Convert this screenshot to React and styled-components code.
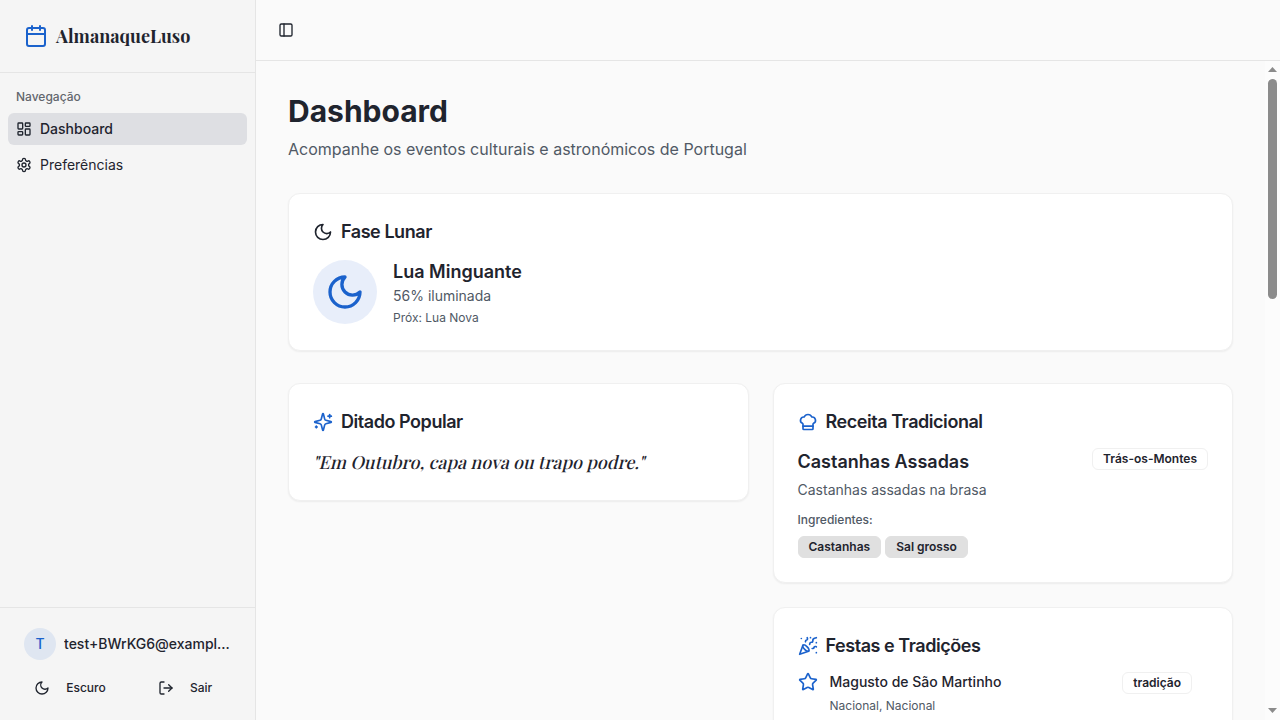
import React from "react";
import styled, { createGlobalStyle, css } from "styled-components";
import { Calendar, LayoutDashboard, LogOut, PanelLeft, ChefHat, PartyPopper, Star } from "lucide-react";

const Global = createGlobalStyle`
  *, *::before, *::after { box-sizing: border-box; }
  body { margin: 0; background: #fafafa; color: #1f242e; font-family: Inter, sans-serif; font-size: 16px; line-height: 24px; }
  h1, h2, h3, p { margin: 0; }
  button { font: inherit; color: inherit; background: none; border: 0; padding: 0; }
  svg { flex-shrink: 0; display: block; }
`;
const blue = "#1b62cc";
const muted = "#505965";

const Shell = styled.div`display: flex; height: 100vh; overflow: hidden;`;
const Sidebar = styled.aside`
  width: 256px; flex: none; display: flex; flex-direction: column;
  background: #f5f5f5; border-right: 1px solid #e5e5e5;
`;
const Brand = styled.div`
  display: flex; align-items: center; gap: 8px; height: 73px; padding: 0 24px;
  border-bottom: 1px solid #e5e5e5; svg { color: ${blue}; }
`;
const BrandName = styled.span`
  font-family: "Playfair Display", "Liberation Serif", serif; font-weight: 700; font-size: 18px; line-height: 28px;
`;
const Nav = styled.nav`flex: 1; padding: 8px; display: flex; flex-direction: column;`;
const NavLabel = styled.div`
  height: 32px; padding: 0 8px; display: flex; align-items: center;
  font-size: 12px; font-weight: 500; line-height: 16px; color: #62666d;
`;
const NavItem = styled.button`
  display: flex; align-items: center; gap: 8px; height: 32px; padding: 0 8px; margin-bottom: 4px;
  border-radius: 6px; font-size: 14px; line-height: 20px; text-align: left;
  ${(p) => p.$active && css`background: #dedfe3; font-weight: 500;`}
`;
const Footer = styled.div`border-top: 1px solid #e5e5e5; padding: 20px 24px 16px; height: 113px;`;
const User = styled.div`display: flex; align-items: center; gap: 8px;`;
const Avatar = styled.div`
  width: 32px; height: 32px; border-radius: 50%; display: grid; place-items: center; flex: none;
  background: #dfe6f1; color: ${blue}; font-size: 14px; font-weight: 500;
`;
const Email = styled.div`
  font-size: 14px; font-weight: 500; line-height: 20px; min-width: 0;
  overflow: hidden; text-overflow: ellipsis; white-space: nowrap;
`;
const Actions = styled.div`display: flex; justify-content: space-between; margin-top: 12px;`;
const Action = styled.button`
  width: 92px; height: 32px; display: flex; align-items: center; justify-content: center; gap: 16px;
  font-size: 12px; font-weight: 500;
`;
const Content = styled.div`flex: 1; min-width: 0; display: flex; flex-direction: column;`;
const Topbar = styled.header`
  height: 61px; flex: none; display: flex; align-items: center; padding: 0 16px; border-bottom: 1px solid #e5e5e5;
`;
const Toggle = styled.button`width: 28px; height: 28px; display: grid; place-items: center;`;
const Body = styled.div`flex: 1; min-height: 0; display: flex;`;
const Main = styled.main`
  flex: 1; min-width: 0; overflow-y: auto; padding: 32px; scrollbar-width: none;
`;
const Scrollbar = styled.div`
  width: 15px; flex: none; background: #fcfcfc; padding: 6px 3px 7px;
  display: flex; flex-direction: column; align-items: center; color: #8b8b8b;
`;
const Thumb = styled.div`width: 9px; height: 220px; margin: 7px 0 auto; border-radius: 5px; background: #8b8b8b;`;
const Title = styled.h1`font-size: 30px; line-height: 36px; font-weight: 700;`;
const Subtitle = styled.p`margin-top: 8px; color: ${muted};`;
const Card = styled.section`
  background: #fff; border: 1px solid #f0f0f0; border-radius: 12px; padding: 24px;
  box-shadow: 0 1px 2px rgba(0, 0, 0, 0.06); margin-top: ${(p) => p.$mt || 0}px;
  min-height: ${(p) => p.$min || 0}px;
`;
const CardTitle = styled.h2`
  display: flex; align-items: center; gap: 8px; margin-bottom: 12px;
  font-size: 18px; line-height: 28px; font-weight: 600; letter-spacing: -0.45px;
  svg { color: ${(p) => (p.$plain ? "inherit" : blue)}; }
`;
const Columns = styled.div`
  display: grid; grid-template-columns: 1fr 1fr; gap: 24px; align-items: start; margin-top: 32px;
`;
const Column = styled.div`display: flex; flex-direction: column; gap: 24px;`;
const Lunar = styled.div`display: flex; align-items: center; gap: 16px;`;
const MoonDisc = styled.div`
  width: 64px; height: 64px; border-radius: 50%; background: #e8eefa; color: ${blue};
  display: grid; place-items: center;
`;
const Heading = styled.h3`font-size: 18px; line-height: 28px; font-weight: 600;`;
const Text = styled.p`font-size: 14px; line-height: 20px; color: ${muted}; margin-top: ${(p) => p.$mt || 0}px;`;
const Small = styled.p`
  font-size: 12px; line-height: 16px; color: ${muted}; margin-top: ${(p) => p.$mt || 0}px;
  font-weight: ${(p) => (p.$medium ? 500 : 400)};
`;
/* The upright face is slanted about its baseline, which keeps the roman letter forms. */
const Quote = styled.p`
  font-family: "Playfair Display", "Liberation Serif", serif; font-weight: 500;
  font-size: 18px; line-height: 28px; transform: skewX(-14deg); transform-origin: 0 20px;
`;
const Between = styled.div`display: flex; justify-content: space-between; align-items: flex-start;`;
const Badge = styled.span`
  display: inline-flex; padding: 2px 10px; border: 1px solid ${(p) => (p.$filled ? "#e0e0e0" : "#f0f0f0")};
  background: ${(p) => (p.$filled ? "#e0e0e0" : "transparent")};
  border-radius: 6px; font-size: 12px; line-height: 16px; font-weight: 600; white-space: nowrap;
`;
const Badges = styled.div`display: flex; gap: 4px; margin-top: 8px;`;
const Event = styled.div`display: flex; gap: 12px; padding-right: 16px; > svg { color: ${blue}; }`;
const EventBody = styled.div`flex: 1;`;
const EventName = styled.div`font-size: 14px; line-height: 20px; font-weight: 500;`;

const Icon = ({ size, children }) => (
  <svg width={size} height={size} viewBox="0 0 24 24" fill="none" stroke="currentColor" strokeWidth="2" strokeLinecap="round" strokeLinejoin="round">
    {children}
  </svg>
);
const Moon = ({ size }) => (
  <Icon size={size}><path d="M12 3a6 6 0 0 0 9 9 9 9 0 1 1-9-9Z" /></Icon>
);
const Gear = ({ size }) => (
  <Icon size={size}>
    <path d="M12.22 2h-.44a2 2 0 0 0-2 2v.18a2 2 0 0 1-1 1.73l-.43.25a2 2 0 0 1-2 0l-.15-.08a2 2 0 0 0-2.73.73l-.22.38a2 2 0 0 0 .73 2.73l.15.1a2 2 0 0 1 1 1.72v.51a2 2 0 0 1-1 1.74l-.15.09a2 2 0 0 0-.73 2.73l.22.38a2 2 0 0 0 2.73.73l.15-.08a2 2 0 0 1 2 0l.43.25a2 2 0 0 1 1 1.73V20a2 2 0 0 0 2 2h.44a2 2 0 0 0 2-2v-.18a2 2 0 0 1 1-1.73l.43-.25a2 2 0 0 1 2 0l.15.08a2 2 0 0 0 2.73-.73l.22-.39a2 2 0 0 0-.73-2.73l-.15-.08a2 2 0 0 1-1-1.74v-.5a2 2 0 0 1 1-1.74l.15-.09a2 2 0 0 0 .73-2.73l-.22-.38a2 2 0 0 0-2.73-.73l-.15.08a2 2 0 0 1-2 0l-.43-.25a2 2 0 0 1-1-1.73V4a2 2 0 0 0-2-2z" />
    <circle cx="12" cy="12" r="3" />
  </Icon>
);
const Sparkles = ({ size }) => (
  <Icon size={size}>
    <path d="M9.937 15.5A2 2 0 0 0 8.5 14.063l-6.135-1.582a.5.5 0 0 1 0-.962L8.5 9.936A2 2 0 0 0 9.937 8.5l1.582-6.135a.5.5 0 0 1 .963 0L14.063 8.5A2 2 0 0 0 15.5 9.937l6.135 1.581a.5.5 0 0 1 0 .964L15.5 14.063a2 2 0 0 0-1.437 1.437l-1.582 6.135a.5.5 0 0 1-.963 0z" />
    <path d="M20 3v4" /><path d="M22 5h-4" /><path d="M4 17v2" /><path d="M5 18H3" />
  </Icon>
);
const Arrow = ({ down }) => (
  <svg width="9" height="5" viewBox="0 0 9 5" fill="currentColor">
    <path d={down ? "M0 0h9L4.5 5z" : "M0 5h9L4.5 0z"} />
  </svg>
);

export default function App() {
  return (
    <>
      <Global />
      <Shell>
        <Sidebar>
          <Brand><Calendar size={24} /><BrandName>AlmanaqueLuso</BrandName></Brand>
          <Nav>
            <NavLabel>Navegação</NavLabel>
            <NavItem $active><LayoutDashboard size={16} />Dashboard</NavItem>
            <NavItem><Gear size={16} />Preferências</NavItem>
          </Nav>
          <Footer>
            <User><Avatar>T</Avatar><Email>test+BWrKG6@example.com</Email></User>
            <Actions>
              <Action><Moon size={16} />Escuro</Action>
              <Action><LogOut size={16} />Sair</Action>
            </Actions>
          </Footer>
        </Sidebar>
        <Content>
          <Topbar><Toggle><PanelLeft size={16} /></Toggle></Topbar>
          <Body>
            <Main>
              <Title>Dashboard</Title>
              <Subtitle>Acompanhe os eventos culturais e astronómicos de Portugal</Subtitle>
              <Card $mt={32}>
                <CardTitle $plain><Moon size={20} />Fase Lunar</CardTitle>
                <Lunar>
                  <MoonDisc><Moon size={40} /></MoonDisc>
                  <div>
                    <Heading>Lua Minguante</Heading>
                    <Text>56% iluminada</Text>
                    <Small $mt={4}>Próx: Lua Nova</Small>
                  </div>
                </Lunar>
              </Card>
              <Columns>
                <Card>
                  <CardTitle><Sparkles size={20} />Ditado Popular</CardTitle>
                  <Quote>"Em Outubro, capa nova ou trapo podre."</Quote>
                </Card>
                <Column>
                  <Card>
                    <CardTitle><ChefHat size={20} />Receita Tradicional</CardTitle>
                    <Between><Heading>Castanhas Assadas</Heading><Badge>Trás-os-Montes</Badge></Between>
                    <Text $mt={4}>Castanhas assadas na brasa</Text>
                    <Small $mt={12} $medium>Ingredientes:</Small>
                    <Badges><Badge $filled>Castanhas</Badge><Badge $filled>Sal grosso</Badge></Badges>
                  </Card>
                  <Card $min={1226}>
                    <CardTitle><PartyPopper size={20} />Festas e Tradições</CardTitle>
                    <Event>
                      <Star size={20} />
                      <EventBody>
                        <Between><EventName>Magusto de São Martinho</EventName><Badge>tradição</Badge></Between>
                        <Small $mt={4}>Nacional, Nacional</Small>
                      </EventBody>
                    </Event>
                  </Card>
                </Column>
              </Columns>
            </Main>
            <Scrollbar><Arrow /><Thumb /><Arrow down /></Scrollbar>
          </Body>
        </Content>
      </Shell>
    </>
  );
}
